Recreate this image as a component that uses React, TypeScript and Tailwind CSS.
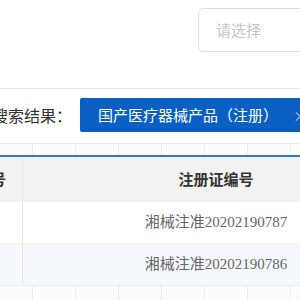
import React from "react";

const gridCols = [32, 75, 118, 161, 204, 247, 290];

function GridStrip({ height, top }: { height: string; top?: boolean }) {
  return (
    <div className={`relative shrink-0 ${height} ${top ? "border-t border-[#ececec]" : ""} bg-[#fcfcfc]`}>
      {gridCols.map((x) => (
        <div key={x} className="absolute top-0 bottom-0 w-px bg-[#ececec]" style={{ left: x }} />
      ))}
    </div>
  );
}

export default function App() {
  return (
    <div
      className="w-[300px] h-[300px] overflow-hidden bg-white flex flex-col"
      style={{ fontFamily: '"Noto Sans CJK SC", "Liberation Sans", sans-serif' }}
    >
      {/* Filter row */}
      <div className="h-[89px] shrink-0 border-b border-[#e4e4e4] flex items-start pt-[8px] pl-[198px]">
        <div className="w-[200px] shrink-0 h-[44px] border border-[#dcdfe6] rounded-[5px] flex items-center px-[17px] text-[15px] text-[#c0c4cc]">
          请选择
        </div>
      </div>

      {/* Search result */}
      <div className="h-[54px] shrink-0 flex items-center ml-[-8px] pb-[2px]">
        <span className="w-[88px] shrink-0 text-[16px] text-[#333] leading-none">搜索结果：</span>
        <div className="h-[34px] shrink-0 bg-[#0a5fc2] rounded-[2px] flex items-center pl-[18px] pr-[20px] text-white text-[15px] whitespace-nowrap">
          <span>国产医疗器械产品（注册）</span>
          <span className="ml-[15px] text-[14px] text-white/60">×</span>
        </div>
      </div>

      <GridStrip height="h-[12px]" top />

      {/* Table */}
      <div className="shrink-0 border-t-2 border-[#2a78d4]">
        <div className="flex h-[44px] bg-[#f2f2f2] text-[15px] font-bold text-[#333]">
          <div className="w-[23px] shrink-0 border-r border-[#e6e6e6] flex items-center justify-end pr-[16px] overflow-hidden whitespace-nowrap">
            <span className="shrink-0">号</span>
          </div>
          <div className="w-[386px] shrink-0 flex items-center justify-center">注册证编号</div>
        </div>
        {["湘械注准20202190787", "湘械注准20202190786"].map((no, i) => (
          <div
            key={no}
            className={`flex h-[42px] text-[15px] text-[#666] border-t border-[#f0f0f0] ${i === 1 ? "bg-[#f5f8fc]" : "bg-white"}`}
            style={{ fontFamily: '"Liberation Serif", "Noto Sans CJK SC", serif' }}
          >
            <div className="w-[23px] shrink-0 border-r border-[#e6e6e6]" />
            <div className="w-[386px] shrink-0 flex items-center justify-center">{no}</div>
          </div>
        ))}
      </div>

      <GridStrip height="flex-1" top />
    </div>
  );
}
